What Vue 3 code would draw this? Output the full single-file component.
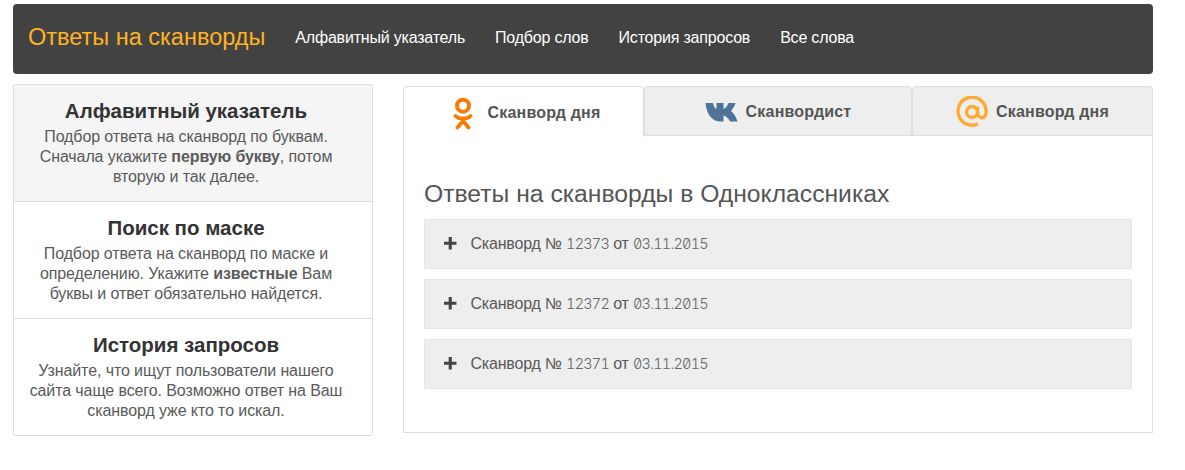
<script setup>
const rows = ['12373', '12372', '12371']
</script>

<template>
  <div class="page">
    <nav class="navbar">
      <a class="brand">Ответы на сканворды</a>
      <a class="nav-link">Алфавитный указатель</a>
      <a class="nav-link">Подбор слов</a>
      <a class="nav-link">История запросов</a>
      <a class="nav-link">Все слова</a>
    </nav>
    <div class="columns">
      <aside class="side">
        <section class="side-item active">
          <h4>Алфавитный указатель</h4>
          <p>Подбор ответа на сканворд по буквам.<br>Сначала укажите <b>первую букву</b>, потом<br>вторую и так далее.</p>
        </section>
        <section class="side-item">
          <h4>Поиск по маске</h4>
          <p>Подбор ответа на сканворд по маске и<br>определению. Укажите <b>известные</b> Вам<br>буквы и ответ обязательно найдется.</p>
        </section>
        <section class="side-item">
          <h4>История запросов</h4>
          <p>Узнайте, что ищут пользователи нашего<br>сайта чаще всего. Возможно ответ на Ваш<br>сканворд уже кто то искал.</p>
        </section>
      </aside>
      <main class="main">
        <div class="tabs">
          <div class="tab tab-active">
            <svg class="icon" width="20" height="33" viewBox="0 0 20 33">
              <circle cx="10" cy="8.700" r="6" fill="none" stroke="#f57c00" stroke-width="4"/>
              <path d="M2.500 19C6 22.500 14 22.500 17.500 19M10 21.500V24M4.500 30.500L10 24L15.500 30.500" fill="none" stroke="#f57c00" stroke-width="3.800" stroke-linecap="round" stroke-linejoin="round"/>
            </svg>
            <span>Сканворд дня</span>
          </div>
          <div class="tab tab-mid">
            <svg class="icon" width="33" height="20" viewBox="0 0 33 20">
              <path d="M0.500 1H8C8.500 4 10 6.500 11.500 7V1H18.500V7C20.500 6.500 22.500 3.500 23.500 1H30.500C29.500 4.500 27.500 7 26 9C28.500 11 31 14.500 32.500 19.500H25C23.500 16.500 21 14 18.500 13.500V19.500H15.500C7 19.500 1.500 12 0.500 1z" fill="#4f7299"/>
            </svg>
            <span>Сканвордист</span>
          </div>
          <div class="tab">
            <svg class="icon" width="32" height="32" viewBox="0 0 32 32">
              <path d="M22 27.800A14 14 0 1 1 30 16c0 3.400-1.700 5.800-4.200 5.800S21.500 19.500 21.500 16.500M21.500 16a5.500 5.500 0 1 1-11 0a5.500 5.500 0 1 1 11 0M21.500 10.500V17" fill="none" stroke="#ffa930" stroke-width="3.400"/>
            </svg>
            <span>Сканворд дня</span>
          </div>
        </div>
        <div class="panel">
          <h3>Ответы на сканворды в Одноклассниках</h3>
          <div v-for="n in rows" :key="n" class="row">
            <svg class="plus" width="12.500" height="12.500" viewBox="0 0 12 12"><path d="M4.500 0h3v4.500H12v3H7.500V12h-3V7.500H0v-3h4.500z" fill="#444"/></svg>
            <span>Сканворд № <code>{{ n }}</code> от <code>03.11.2015</code></span>
          </div>
        </div>
      </main>
    </div>
  </div>
</template>

<style scoped>
.page {
  width: 1140px;
  margin-left: 13px;
  padding-top: 4px;
  font-family: "Liberation Sans", Arial, sans-serif;
  font-size: 14px;
  color: #555;
}
.navbar {
  height: 70px;
  background: #424242;
  border-radius: 4px;
  display: flex;
  align-items: center;
  padding-bottom: 4px;
  box-sizing: border-box;
}
.brand {
  color: #ffb321;
  font-size: 23.500px;
  margin-left: 15px;
  margin-right: 30px;
}
.nav-link {
  color: #fff;
  font-size: 16px;
  margin-right: 30px;
  margin-top: 1px;
  letter-spacing: -0.2px;
}
.columns {
  display: flex;
  margin-top: 10px;
  gap: 30px;
  align-items: flex-start;
}
.side {
  width: 360px;
  box-sizing: border-box;
  border: 1px solid #ddd;
  border-radius: 2px;
  flex: none;
}
.side-item {
  height: 117px;
  box-sizing: border-box;
  padding: 15px 14px 0 0;
  text-align: center;
  border-top: 1px solid #ddd;
}
.side-item:first-child {
  border-top: 0;
  height: 116px;
}
.side-item.active {
  background: #f5f5f5;
}
.side-item h4 {
  margin: 0;
  font-size: 20.500px;
  line-height: 22px;
  font-weight: 700;
  color: #333;
}
.side-item p {
  margin: 5px 0 0;
  font-size: 16px;
  line-height: 20px;
  color: #5a5a5a;
  letter-spacing: -0.1px;
}
.main {
  width: 750px;
  margin-top: 2px;
}
.tabs {
  display: flex;
  height: 51px;
  position: relative;
  z-index: 1;
}
.tab {
  width: 241px;
  height: 50px;
  box-sizing: border-box;
  background: #eee;
  border: 1px solid #ddd;
  border-radius: 4px 4px 0 0;
  padding-top: 2px;
  display: flex;
  align-items: center;
  justify-content: center;
  gap: 8px;
  font-size: 16px;
  font-weight: 700;
  color: #555;
  letter-spacing: 0.2px;
}
.tab-mid {
  width: 268px;
}
.tab-active {
  background: #fff;
  height: 51px;
  border-bottom: 0;
  gap: 14px;
  padding-left: 7px;
}
.icon {
  flex: none;
}
.panel {
  height: 297px;
  margin-top: -1px;
  box-sizing: border-box;
  border: 1px solid #ddd;
  border-top: 0;
  padding: 45px 20px 0;
}
.panel h3 {
  margin: 0 0 12px;
  font-size: 24.700px;
  line-height: 26px;
  font-weight: 400;
  color: #555;
}
.row {
  height: 50px;
  box-sizing: border-box;
  background: #eee;
  border: 1px solid #e5e5e5;
  border-radius: 2px;
  margin-bottom: 10px;
  display: flex;
  align-items: center;
  padding: 0 0 1px 19px;
  gap: 14px;
  font-size: 16px;
  letter-spacing: -0.2px;
  color: #5a5a5a;
}
.plus {
  flex: none;
}
code {
  font-family: Inter, "DejaVu Sans Mono", monospace;
  font-feature-settings: "zero", "tnum";
  font-size: 14.500px;
  font-weight: 300;
  letter-spacing: -0.8px;
  color: #666;
}
</style>
